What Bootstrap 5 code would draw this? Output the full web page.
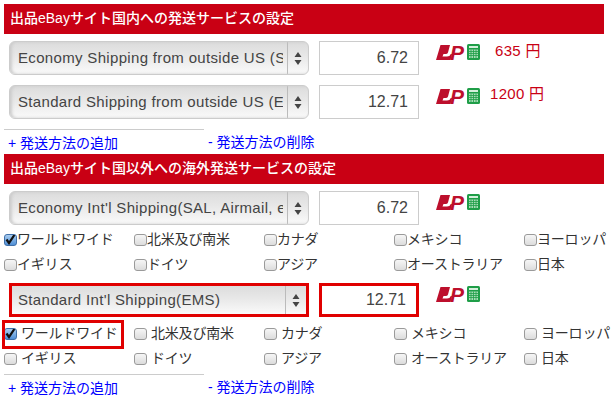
<!DOCTYPE html>
<html lang="ja">
<head>
  <meta charset="UTF-8">
  <title>発送サービスの設定</title>
  <link href="https://cdn.jsdelivr.net/npm/bootstrap@5.3.0/dist/css/bootstrap.min.css" rel="stylesheet">
  <style>
    body { font-family: "Liberation Sans", "Noto Sans CJK JP", sans-serif; font-size: 14px; color: #333; overflow: hidden; }
    .page-wrap { width: 612px; height: 416px; overflow: hidden; padding: 4px 8px 0 4px; }
    .sec-head { height: 30px; line-height: 29px; padding-left: 6px; background: #c90014; color: #fff; font-size: 14px; font-weight: 500; }
    .ship-row { height: 34px; padding-left: 5px; }
    .ship-select { width: 300px; height: 34px; padding: 0 25px 0 8px; border: 1px solid #ccc; border-radius: 6px; color: #444; font-size: 15px; letter-spacing: .33px; appearance: none; outline: 0;
      background: url("data:image/svg+xml,%3Csvg xmlns='http://www.w3.org/2000/svg' width='21' height='32'%3E%3Cpath d='M.5 0v32' stroke='%23bbb'/%3E%3Cpath d='M11 10l3.500 5h-7zM11 23l3.500-5h-7z' fill='%23444'/%3E%3C/svg%3E") right 0 center no-repeat, linear-gradient(#dcdcdc, #e8e8e8 45%, #fafafa); box-shadow: inset 2px 0 3px #ccc; }
    .ship-price { width: 100px; height: 34px; margin-left: 10px; padding: 0 10px; border: 1px solid #ccc; text-align: right; color: #444; font-size: 16px; outline: 0; }
    .marked { border: 3px solid #e00000; border-radius: 0; }
    .ship-select.marked { padding-left: 6px; box-shadow: none; }
    .jp-mark { width: 44px; height: 17px; margin: 3px 0 0 17px; flex: none; }
    .yen-text { color: #c90014; font-size: 15px; line-height: 18px; letter-spacing: .3px; margin-top: 1px; }
    .yen-first { margin-left: 15px; }
    .yen-second { margin-left: 10px; margin-top: 0; }
    .check-row { height: 25px; }
    .check-group { padding-top: 2px; margin-bottom: 6px; }
    .check-cell { width: 130px; flex: none; display: flex; align-items: center; white-space: nowrap; margin: 0; letter-spacing: -.2px; }
    .check-cell:last-child { width: 86px; }
    .gapped { padding-top: 4px; margin-bottom: 3px; }
    .gapped .check-cell { gap: 4px; }
    .box-input { appearance: none; width: 13px; height: 12px; margin: 0; flex: none; border: 1px solid #9a9a9a; border-radius: 3px; background: linear-gradient(#f6f6f6, #dcdcdc); }
    .box-input:checked { border-color: #3f6fa8; background: url("data:image/svg+xml,%3Csvg xmlns='http://www.w3.org/2000/svg' width='13' height='12'%3E%3Cpath d='M2.500 5.500l2.500 3.500L11 0' fill='none' stroke='%23111' stroke-width='2.200'/%3E%3C/svg%3E") center no-repeat, linear-gradient(#a9cdf0, #4f8fd6); }
    .boxed-cell { position: relative; }
    .boxed-cell::after { content: ""; position: absolute; left: -2px; top: -1px; width: 122px; height: 29px; border: 3px solid #e00000; }
    .action-row { height: 24px; }
    .rule-line { width: 200px; height: 1px; background: #ccc; }
    .action-row a { color: #00f; text-decoration: none; }
    .add-link { width: 204px; padding-left: 4px; margin-top: 3px; }
    .del-link { margin-top: 2px; }
    .gap-ten { margin-top: 10px; }
    .gap-seven { margin-top: 7px; }
  </style>
</head>
<body>
  <div class="page-wrap">
    <div class="sec-head">出品eBayサイト国内への発送サービスの設定</div>

    <div class="ship-row d-flex gap-seven">
      <select class="ship-select"><option>Economy Shipping from outside US (Standard)</option></select>
      <input class="ship-price" value="6.72">
      <svg class="jp-mark" viewBox="0 0 44 17"><use href="#jp"/></svg>
      <span class="yen-text yen-first">635 円</span>
    </div>
    <div class="ship-row d-flex gap-ten">
      <select class="ship-select"><option>Standard Shipping from outside US (Expedited)</option></select>
      <input class="ship-price" value="12.71">
      <svg class="jp-mark" viewBox="0 0 44 17"><use href="#jp"/></svg>
      <span class="yen-text yen-second">1200 円</span>
    </div>
    <div class="rule-line gap-ten"></div>
    <div class="action-row d-flex">
      <a class="add-link" href="#">+ 発送方法の追加</a>
      <a class="del-link" href="#">- 発送方法の削除</a>
    </div>

    <div class="sec-head">出品eBayサイト国以外への海外発送サービスの設定</div>

    <div class="ship-row d-flex gap-seven">
      <select class="ship-select"><option>Economy Int'l Shipping(SAL, Airmail, ePacket)</option></select>
      <input class="ship-price" value="6.72">
      <svg class="jp-mark" viewBox="0 0 44 17"><use href="#jp"/></svg>
    </div>
    <div class="check-group">
      <div class="check-row d-flex">
        <label class="check-cell"><input type="checkbox" class="box-input" checked>ワールドワイド</label>
        <label class="check-cell"><input type="checkbox" class="box-input">北米及び南米</label>
        <label class="check-cell"><input type="checkbox" class="box-input">カナダ</label>
        <label class="check-cell"><input type="checkbox" class="box-input">メキシコ</label>
        <label class="check-cell"><input type="checkbox" class="box-input">ヨーロッパ</label>
      </div>
      <div class="check-row d-flex">
        <label class="check-cell"><input type="checkbox" class="box-input">イギリス</label>
        <label class="check-cell"><input type="checkbox" class="box-input">ドイツ</label>
        <label class="check-cell"><input type="checkbox" class="box-input">アジア</label>
        <label class="check-cell"><input type="checkbox" class="box-input">オーストラリア</label>
        <label class="check-cell"><input type="checkbox" class="box-input">日本</label>
      </div>
    </div>

    <div class="ship-row d-flex">
      <select class="ship-select marked"><option>Standard Int'l Shipping(EMS)</option></select>
      <input class="ship-price marked" value="12.71">
      <svg class="jp-mark" viewBox="0 0 44 17"><use href="#jp"/></svg>
    </div>
    <div class="gapped">
      <div class="check-row d-flex">
        <label class="check-cell boxed-cell"><input type="checkbox" class="box-input" checked>ワールドワイド</label>
        <label class="check-cell"><input type="checkbox" class="box-input">北米及び南米</label>
        <label class="check-cell"><input type="checkbox" class="box-input">カナダ</label>
        <label class="check-cell"><input type="checkbox" class="box-input">メキシコ</label>
        <label class="check-cell"><input type="checkbox" class="box-input">ヨーロッパ</label>
      </div>
      <div class="check-row d-flex">
        <label class="check-cell"><input type="checkbox" class="box-input">イギリス</label>
        <label class="check-cell"><input type="checkbox" class="box-input">ドイツ</label>
        <label class="check-cell"><input type="checkbox" class="box-input">アジア</label>
        <label class="check-cell"><input type="checkbox" class="box-input">オーストラリア</label>
        <label class="check-cell"><input type="checkbox" class="box-input">日本</label>
      </div>
    </div>
    <div class="rule-line"></div>
    <div class="action-row d-flex">
      <a class="add-link" href="#">+ 発送方法の追加</a>
      <a class="del-link" href="#">- 発送方法の削除</a>
    </div>
  </div>

  <svg width="0" height="0" class="d-block">
    <defs>
      <g id="jp">
        <path d="M4.500 1H14L12 8.500Q11.500 10 9.500 10H7.500L6.500 12.500H11Q14 12.500 14.800 10H16L14.500 16H0Z" fill="#bd0f2c"/>
        <text x="14" y="16" font-family="Liberation Sans" font-size="21" font-weight="700" font-style="italic" fill="#bd0f2c">P</text>
        <rect x="31" y="0" width="13" height="16" rx="1.500" fill="#1f9e48"/>
        <path d="M33 5.500h9v8.500h-9z" fill="#a7dcb6"/>
        <path d="M33 7.500h9M33 9.500h9M33 11.500h9M35 5.500v8.500M37.500 5.500v8.500M40 5.500v8.500" stroke="#1f9e48" stroke-width=".8"/>
        <path d="M33 2h9v2h-9z" fill="#d5efdc"/>
      </g>
    </defs>
  </svg>
</body>
</html>
